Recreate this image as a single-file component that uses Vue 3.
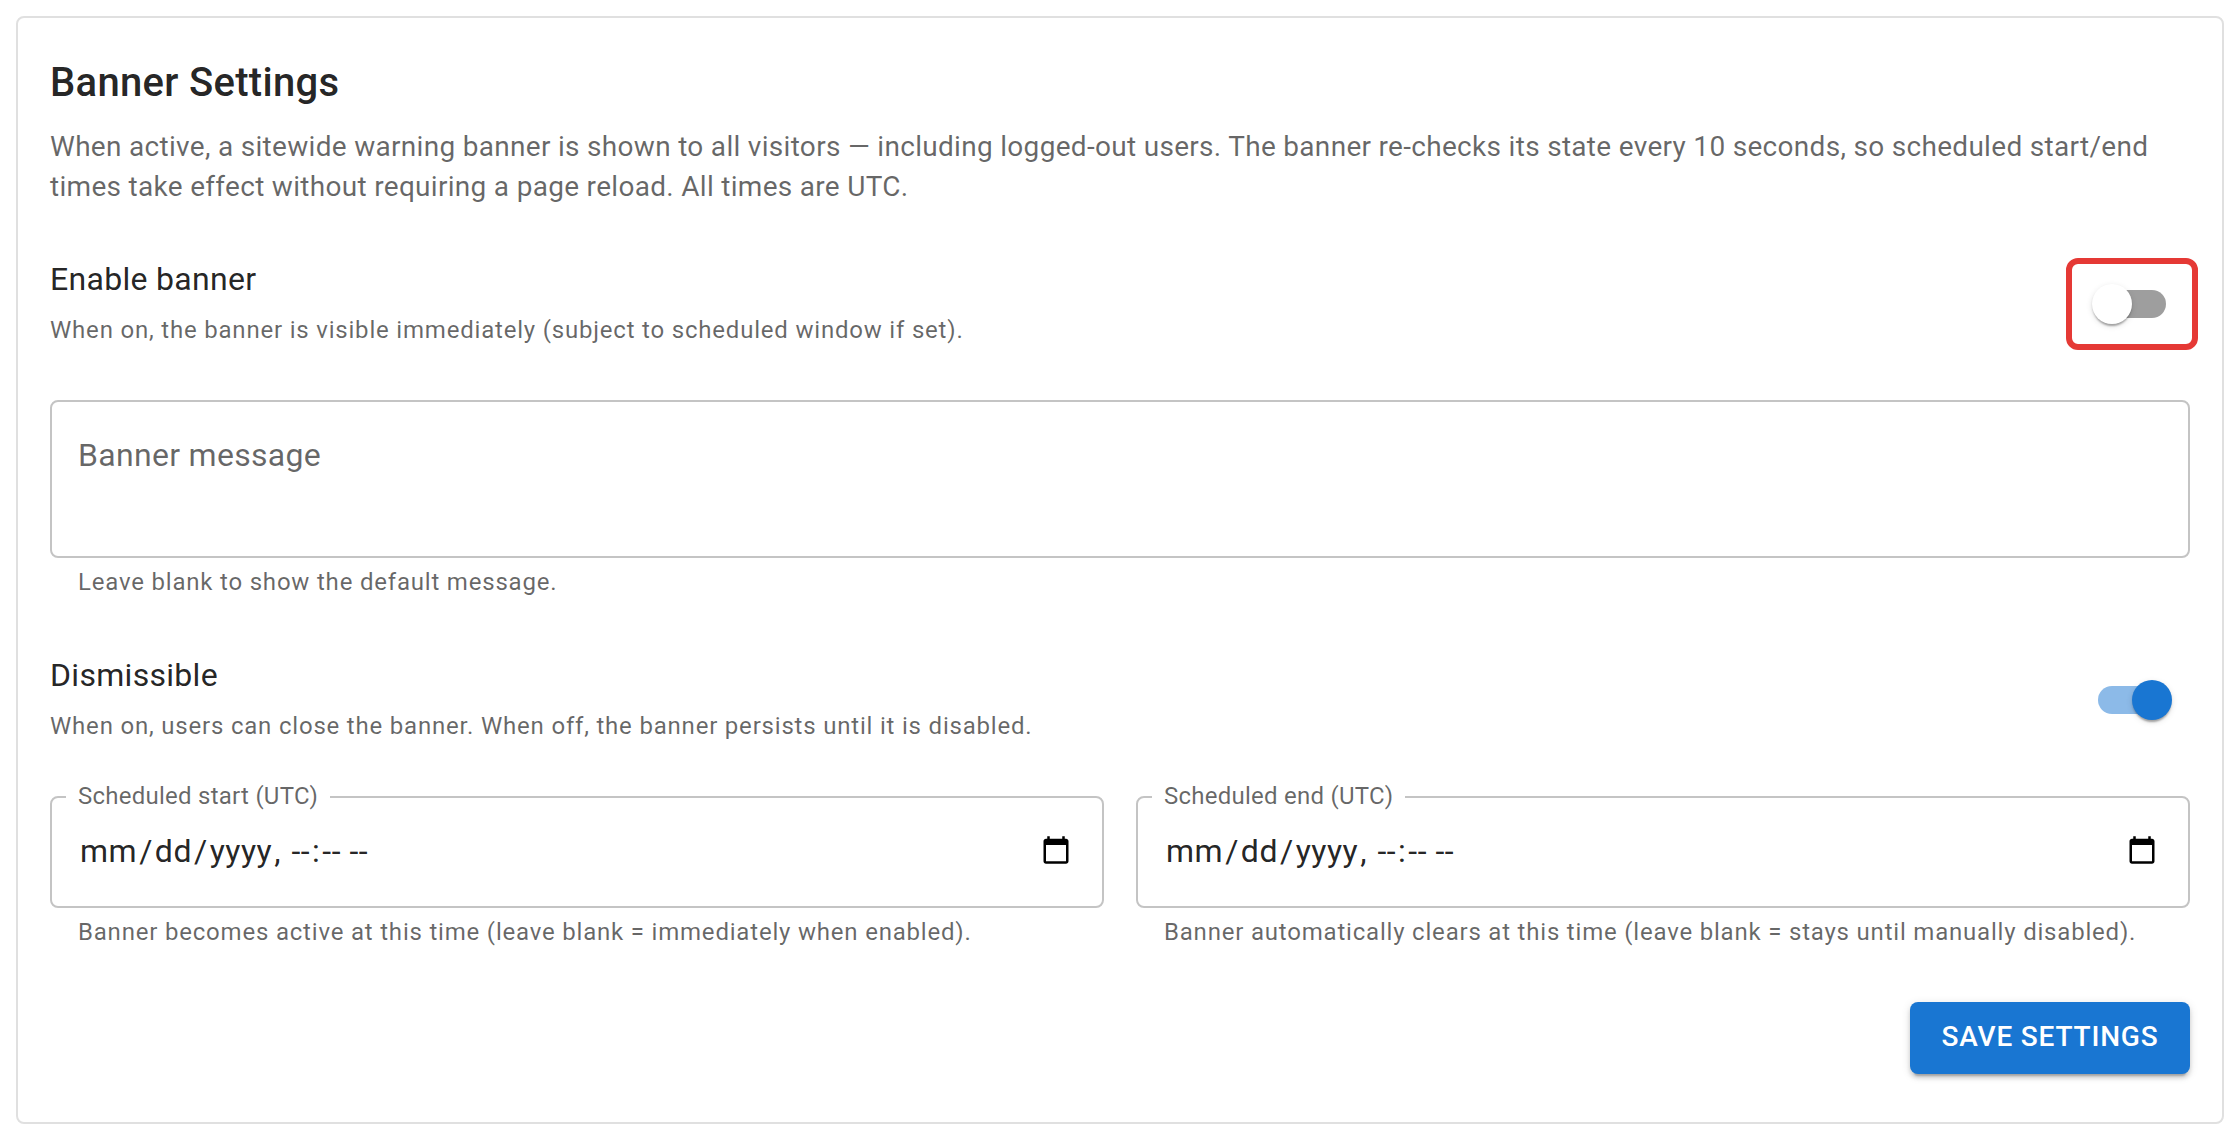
<script setup>
const fields = [
  { label: 'Scheduled start (UTC)', help: 'Banner becomes active at this time (leave blank = immediately when enabled).' },
  { label: 'Scheduled end (UTC)', help: 'Banner automatically clears at this time (leave blank = stays until manually disabled).' },
]
</script>

<template>
  <div class="page">
    <section class="card">
      <h2 class="title">Banner Settings</h2>
      <p class="intro">When active, a sitewide warning banner is shown to all visitors — including logged-out users. The banner re-checks its state every 10 seconds, so scheduled start/end times take effect without requiring a page reload. All times are UTC.</p>

      <div class="row row-first">
        <div class="row-text">
          <div class="row-title">Enable banner</div>
          <div class="caption">When on, the banner is visible immediately (subject to scheduled window if set).</div>
        </div>
        <div class="switch flagged">
          <span class="track"></span>
          <span class="thumb"></span>
        </div>
      </div>

      <div class="message-field">
        <span class="placeholder">Banner message</span>
      </div>
      <div class="helper">Leave blank to show the default message.</div>

      <div class="row row-second">
        <div class="row-text">
          <div class="row-title">Dismissible</div>
          <div class="caption">When on, users can close the banner. When off, the banner persists until it is disabled.</div>
        </div>
        <div class="switch on">
          <span class="track"></span>
          <span class="thumb"></span>
        </div>
      </div>

      <div class="dates">
        <div v-for="f in fields" :key="f.label" class="date-col">
          <div class="date-field">
            <span class="date-label">{{ f.label }}</span>
            <input class="date-input" type="datetime-local" />
          </div>
          <div class="helper">{{ f.help }}</div>
        </div>
      </div>

      <div class="actions">
        <button class="save" type="button">Save Settings</button>
      </div>
    </section>
  </div>
</template>

<style>
html, body { margin: 0; background: #fff; }
</style>

<style scoped>
.page {
  padding: 16px;
  font-family: Roboto, "Noto Sans", sans-serif;
  box-sizing: border-box;
  width: 2240px;
}
.card {
  box-sizing: border-box;
  border: 2px solid #e0e0e0;
  border-radius: 8px;
  padding: 32px 32px 48px;
  background: #fff;
}
.title {
  margin: 1px 0 12px;
  font-size: 40px;
  font-weight: 500;
  line-height: 64px;
  letter-spacing: 0.3px;
  color: rgba(0, 0, 0, 0.87);
}
.intro {
  margin: 0;
  font-size: 28px;
  line-height: 40px;
  letter-spacing: 0.3px;
  color: rgba(0, 0, 0, 0.6);
}
.row {
  display: flex;
  align-items: center;
  justify-content: space-between;
  height: 100px;
}
.row-first { margin-top: 47px; }
.row-text { padding-bottom: 4px; }
.row-title {
  font-size: 32px;
  line-height: 48px;
  letter-spacing: 0.3px;
  color: rgba(0, 0, 0, 0.87);
}
.caption {
  margin-top: 7px;
  font-size: 24px;
  line-height: 40px;
  letter-spacing: 0.8px;
  color: rgba(0, 0, 0, 0.6);
}
.switch {
  position: relative;
  flex: none;
  width: 116px;
  height: 76px;
  border-radius: 4px;
}
.flagged { outline: 6px solid #e53935; outline-offset: 2px; }
.track {
  position: absolute;
  left: 24px;
  top: 24px;
  width: 68px;
  height: 28px;
  border-radius: 14px;
  background: #000;
  opacity: 0.38;
}
.thumb {
  position: absolute;
  left: 18px;
  top: 18px;
  width: 40px;
  height: 40px;
  border-radius: 50%;
  background: #fff;
  box-shadow: 0 4px 2px -2px rgba(0,0,0,.2), 0 2px 2px 0 rgba(0,0,0,.14), 0 2px 6px 0 rgba(0,0,0,.12);
}
.on .track { background: #1976d2; opacity: 0.5; }
.on .thumb { left: 58px; background: #1976d2; }
.message-field {
  box-sizing: border-box;
  margin-top: 46px;
  height: 158px;
  border: 2px solid #c4c4c4;
  border-radius: 8px;
  padding: 30px 26px;
}
.placeholder {
  font-size: 32px;
  line-height: 46px;
  letter-spacing: 0.3px;
  color: rgba(0, 0, 0, 0.6);
}
.helper {
  margin: 4px 28px 0;
  font-size: 24px;
  line-height: 40px;
  letter-spacing: 0.8px;
  color: rgba(0, 0, 0, 0.6);
}
.row-second { margin-top: 48px; }
.dates {
  display: grid;
  grid-template-columns: 1fr 1fr;
  gap: 32px;
  margin-top: 46px;
}
.date-field {
  position: relative;
  box-sizing: border-box;
  display: flex;
  align-items: center;
  height: 112px;
  border: 2px solid #c4c4c4;
  border-radius: 8px;
  padding: 0 28px 2px 26px;
}
.date-label {
  position: absolute;
  left: 14px;
  top: -14px;
  padding: 0 12px;
  background: #fff;
  font-size: 24px;
  line-height: 24px;
  letter-spacing: 0.25px;
  color: rgba(0, 0, 0, 0.6);
}
.date-input {
  flex: 1;
  min-width: 0;
  border: 0;
  outline: 0;
  padding: 0;
  margin: 0;
  background: transparent;
  font-family: inherit;
  font-size: 32px;
  letter-spacing: 0.5px;
  color: rgba(0, 0, 0, 0.87);
}
.date-input::-webkit-datetime-edit-month-field,
.date-input::-webkit-datetime-edit-day-field,
.date-input::-webkit-datetime-edit-year-field,
.date-input::-webkit-datetime-edit-hour-field,
.date-input::-webkit-datetime-edit-minute-field,
.date-input::-webkit-datetime-edit-ampm-field {
  padding: 2px;
}
.actions {
  display: flex;
  justify-content: flex-end;
  margin-top: 50px;
}
.save {
  box-sizing: border-box;
  width: 280px;
  height: 72px;
  padding: 0 0 4px;
  border: 0;
  border-radius: 8px;
  background: #1976d2;
  color: #fff;
  font-family: inherit;
  font-size: 28px;
  font-weight: 500;
  letter-spacing: 0.8px;
  text-transform: uppercase;
  box-shadow: 0 6px 2px -4px rgba(0,0,0,.2), 0 4px 4px 0 rgba(0,0,0,.14), 0 2px 10px 0 rgba(0,0,0,.12);
}
</style>
